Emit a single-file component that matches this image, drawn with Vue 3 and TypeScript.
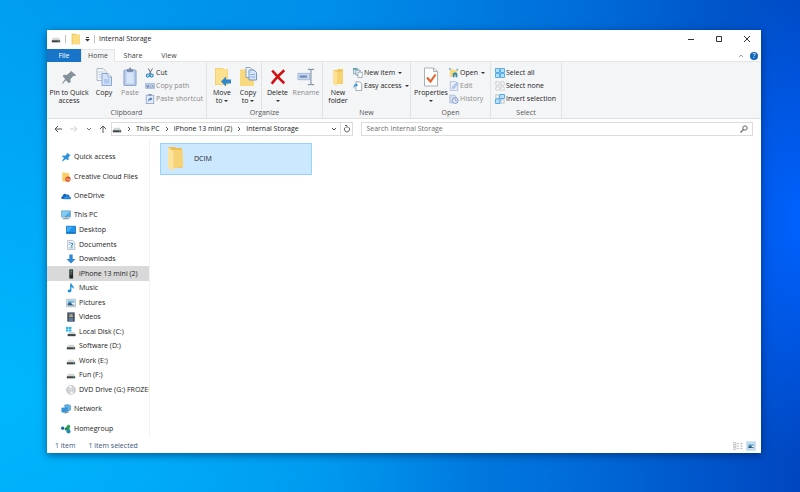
<script setup lang="ts">
import { ref } from 'vue'

interface SmallCommand {
  label: string
  icon: string
  disabled?: boolean
  menu?: boolean
}

interface BigCommand {
  lines: string[]
  icon: string
  size: 'sm' | 'md' | 'lg'
  disabled?: boolean
  menu?: 'inline' | 'below'
  divider?: boolean
}

interface RibbonGroup {
  name: string
  id: string
  big: BigCommand[]
  small: SmallCommand[]
}

interface NavItem {
  label: string
  icon: string
  child?: boolean
  active?: boolean
  spaced?: boolean
}

const tabs = ['File', 'Home', 'Share', 'View']

const groups: RibbonGroup[] = [
  {
    name: 'Clipboard',
    id: 'clipboard',
    big: [
      { lines: ['Pin to Quick', 'access'], icon: 'pin', size: 'lg' },
      { lines: ['Copy'], icon: 'copy', size: 'sm' },
      { lines: ['Paste'], icon: 'paste', size: 'sm', disabled: true },
    ],
    small: [
      { label: 'Cut', icon: 'cut' },
      { label: 'Copy path', icon: 'path', disabled: true },
      { label: 'Paste shortcut', icon: 'shortcut', disabled: true },
    ],
  },
  {
    name: 'Organize',
    id: 'organize',
    big: [
      { lines: ['Move', 'to'], icon: 'move', size: 'sm', menu: 'inline' },
      { lines: ['Copy', 'to'], icon: 'copyto', size: 'sm', menu: 'inline' },
      { lines: ['Delete'], icon: 'delete', size: 'md', menu: 'below', divider: true },
      { lines: ['Rename'], icon: 'rename', size: 'sm', disabled: true },
    ],
    small: [],
  },
  {
    name: 'New',
    id: 'new',
    big: [{ lines: ['New', 'folder'], icon: 'newfolder', size: 'sm' }],
    small: [
      { label: 'New item', icon: 'newitem', menu: true },
      { label: 'Easy access', icon: 'easy', menu: true },
    ],
  },
  {
    name: 'Open',
    id: 'open',
    big: [{ lines: ['Properties'], icon: 'properties', size: 'md', menu: 'below' }],
    small: [
      { label: 'Open', icon: 'open', menu: true },
      { label: 'Edit', icon: 'edit', disabled: true },
      { label: 'History', icon: 'history', disabled: true },
    ],
  },
  {
    name: 'Select',
    id: 'select',
    big: [],
    small: [
      { label: 'Select all', icon: 'selall' },
      { label: 'Select none', icon: 'selnone' },
      { label: 'Invert selection', icon: 'selinv' },
    ],
  },
]

const crumbs = ['This PC', 'iPhone 13 mini (2)', 'Internal Storage']

const places: NavItem[] = [
  { label: 'Quick access', icon: 'quick' },
  { label: 'Creative Cloud Files', icon: 'cc', spaced: true },
  { label: 'OneDrive', icon: 'onedrive', spaced: true },
  { label: 'This PC', icon: 'pc', spaced: true },
  { label: 'Desktop', icon: 'desktop', child: true },
  { label: 'Documents', icon: 'documents', child: true },
  { label: 'Downloads', icon: 'downloads', child: true },
  { label: 'iPhone 13 mini (2)', icon: 'phone', child: true, active: true },
  { label: 'Music', icon: 'music', child: true },
  { label: 'Pictures', icon: 'pictures', child: true },
  { label: 'Videos', icon: 'videos', child: true },
  { label: 'Local Disk (C:)', icon: 'sysdrive', child: true },
  { label: 'Software (D:)', icon: 'drive', child: true },
  { label: 'Work (E:)', icon: 'drive', child: true },
  { label: 'Fun (F:)', icon: 'drive', child: true },
  { label: 'DVD Drive (G:) FROZEN', icon: 'dvd', child: true },
  { label: 'Network', icon: 'network', spaced: true },
  { label: 'Homegroup', icon: 'homegroup', spaced: true },
]

const activeTab = ref('Home')
const query = ref('')
</script>

<template>
  <div class="desktop">
    <svg class="sprites" aria-hidden="true">
      <symbol id="drive" viewBox="0 0 12 12"><path d="M2.500 4.500h7L11 7.500H1z" fill="#d3d6d7" /><path d="M1 7.500h10V10H1z" fill="#3c4143" /><path d="M8.500 8.500h1.500" stroke="#63d27b" /></symbol>
      <symbol id="sysdrive" viewBox="0 0 12 12"><path d="M0 0h3v2.500H0zM3.500 0h3v2.500h-3zM0 3h3v2.500H0zM3.500 3h3v2.500h-3z" fill="#25b5ee" /><path d="M4 6h6l1.500 2.500H2z" fill="#d3d6d7" /><path d="M2 8.500h9.500V11H2z" fill="#3c4143" /></symbol>
      <symbol id="folder" viewBox="0 0 12 14"><path d="M1.500 1h5l1 1H11v11H1.500z" fill="#edc251" /><path d="M2.500 2h8.500v11H2.500z" fill="#fbdc82" /></symbol>
      <symbol id="newfolder" viewBox="0 0 16 20"><path d="M3 3h4l1-1h5v15H3z" fill="#f0c75b" /><path d="M3 3l4 2v14l-4-2z" fill="#fde196" /><path d="M7 5h6v11l-6 1z" fill="#f7d271" /></symbol>
      <symbol id="pin" viewBox="0 0 20 20"><path d="M12 3l6 5-2 1-1-.5-3.500 4 .3 3-1.800 1.500-3.500-3.500L3 17.500l-.7-.6 3.400-4.700L2.800 9l1.700-1.500 3 .4 4-3.500z" fill="#84909a" /></symbol>
      <symbol id="copy" viewBox="0 0 18 20"><path d="M2 1.500h6l3 3v9H2z" fill="#f2f5f9" stroke="#b2b9c2" /><path d="M3.500 5h5M3.500 7.500h5M3.500 10h5" stroke="#bccde6" /><path d="M7 6.500h6l3.500 3.500v8.500H7z" fill="#d3e2f7" stroke="#8ca7cf" /><path d="M13 6.500V10h3.500" fill="#fff" stroke="#8ca7cf" /><path d="M9 12h5.500v4.500H9z" fill="#afcaf0" /></symbol>
      <symbol id="paste" viewBox="0 0 18 20"><rect x="3" y="3" width="12" height="15.500" rx="1" fill="#b9cdec" stroke="#93a7cc" stroke-width="1.200" /><path d="M5.500 5.500h7v11h-7z" fill="#d8e5f8" /><path d="M6 2h2V.8h2V2h2v3H6z" fill="#7d8dab" /></symbol>
      <symbol id="cut" viewBox="0 0 12 12"><path d="M4 .5l3.500 7M9 .5L5 7.500" stroke="#66717c" stroke-width="1.200" /><circle cx="3.500" cy="9" r="1.800" fill="#d7ecfb" stroke="#247fc2" stroke-width="1.300" /><circle cx="8" cy="9" r="1.800" fill="#d7ecfb" stroke="#247fc2" stroke-width="1.300" /></symbol>
      <symbol id="path" viewBox="0 0 12 12"><path d="M.5 3h11v6H.5z" fill="#b9cbe5" stroke="#aabcd9" /><path d="M2 5l1 3 1-3 1 3M6.500 7.500h1M8.500 5l1.500 3" stroke="#657fa9" fill="none" stroke-width=".8" /></symbol>
      <symbol id="shortcut" viewBox="0 0 12 12"><rect x="1.500" y="1.500" width="9" height="10" fill="#e3ecf9" stroke="#92a6c9" /><path d="M4 0h4v2H4z" fill="#8192ae" /><path d="M4 9.500V7c0-1 1-2 2.500-2V3.500L9 6 6.500 8V6.800C5 6.800 5 8 4 9.500z" fill="#4e76ba" /></symbol>
      <symbol id="move" viewBox="0 0 18 20"><path d="M2 1h8l1 1h4v16H2z" fill="#f4d272" /><path d="M3 2h11v15H3z" fill="#fbe08f" /><path d="M8 14.500l5-5v3h5v4h-5v3z" fill="#2c88cc" /></symbol>
      <symbol id="copyto" viewBox="0 0 18 20"><path d="M1 2.500h14V19H1z" fill="#f8d97e" /><path d="M7 .5h4l2 2v8H7z" fill="#f2f6fb" stroke="#8ea3c1" /><path d="M10 3h5l2.500 2.500V13H10z" fill="#d5e4f8" stroke="#7897c6" /><path d="M11.500 7.500h4.500M11.500 10h4.500" stroke="#8caee0" /></symbol>
      <symbol id="delete" viewBox="0 0 20 20"><path d="M3.500 3c4 4 8 9 13.500 14M17 2.500C12 7 7 12 3 17.500" fill="none" stroke="#d00f13" stroke-width="2.800" /></symbol>
      <symbol id="rename" viewBox="0 0 20 20"><path d="M1 6h13v7H1z" fill="#cbdaf0" stroke="#9db4d8" /><path d="M3 9.500h8" stroke="#6d89b3" stroke-width="2.500" /><path d="M12 1.500h2.500l1 1 1-1H19M15.500 2v16M12 18.500h2.500l1-1 1 1H19" fill="none" stroke="#8998ad" stroke-width="1.300" /></symbol>
      <symbol id="newitem" viewBox="0 0 12 12"><path d="M.5 1h5v6h-5z" fill="#dcecf5" stroke="#7d99a9" /><path d="M3.500 2.500h5v6h-5z" fill="#edf5fa" stroke="#7d99a9" /><path d="M6 5h5v6.500H6z" fill="#fff" stroke="#8f9dab" /><path d="M0 0h5v2H0z" fill="#5a9fad" /></symbol>
      <symbol id="easy" viewBox="0 0 12 12"><path d="M3.500 1H8l2.500 2.500v8h-7z" fill="#fff" stroke="#8f9dab" /><path d="M1.300 9.500C0 6 1 4 3.500 4V2.500L6 5 3.500 7V5.500C2 5.500 1.500 7 1.300 9.500z" fill="#2b8fd4" /></symbol>
      <symbol id="properties" viewBox="0 0 18 20"><path d="M2.500 1h9l4 3.500v14.500h-13z" fill="#fff" stroke="#a9afb5" /><path d="M11.500 1v3.500h4" fill="none" stroke="#a9afb5" /><path d="M5 10.500l3.500 4L13.500 7.500" fill="none" stroke="#e4612a" stroke-width="2.100" /></symbol>
      <symbol id="open" viewBox="0 0 12 12"><path d="M1 1.500h4l1 1h4v8H1z" fill="#f8da7a" /><path d="M0 0h2v2H0zM9 1h2v2H9z" fill="#65b4da" /><path d="M4.500 11V7.500c0-3 5.500-3 5.500 0V11H8V8H6.500v3z" fill="#278bc8" /></symbol>
      <symbol id="edit" viewBox="0 0 12 12"><path d="M1.500.5h6l3 3v8h-9z" fill="#e8eff9" stroke="#a8b8d6" /><path d="M4 9l.5-2.500L10 1.500l1.500 1.500L6.500 8.500z" fill="#b9cff0" stroke="#8aa7d5" stroke-width=".7" /></symbol>
      <symbol id="history" viewBox="0 0 12 12"><path d="M1 1.500h6l1.500 2v7H1z" fill="#d4dff0" stroke="#a7b6d0" /><circle cx="7.500" cy="7.800" r="3.500" fill="#e8eff9" stroke="#7e99c6" stroke-width="1.200" /><path d="M7.500 5.500V8h2" fill="none" stroke="#738fbf" /></symbol>
      <symbol id="selall" viewBox="0 0 12 12"><path d="M.6.600h4.800v4.800H.6zM6.600.600h4.800v4.800H6.600zM.6 6.600h4.800v4.800H.6zM6.600 6.600h4.800v4.800H6.600z" fill="#b6e0fb" stroke="#4aa6e2" stroke-width="1.100" /></symbol>
      <symbol id="selnone" viewBox="0 0 12 12"><path d="M1 1h4v4H1zM7 1h4v4H7zM1 7h4v4H1zM7 7h4v4H7z" fill="#fafafa" stroke="#b4b8bc" stroke-dasharray="1.500 .7" /></symbol>
      <symbol id="selinv" viewBox="0 0 12 12"><path d="M1 1h4v4H1zM7 7h4v4H7z" fill="#fafafa" stroke="#b4b8bc" /><path d="M5.600.600h5.800v4.800H5.600zM.6 6h5.400v5.400H.6z" fill="#b6e0fb" stroke="#4aa6e2" stroke-width="1.100" /></symbol>
      <symbol id="quick" viewBox="0 0 12 12"><path d="M7 1l4.500 3-1.200.8L8.800 7l.5 2-1.200 1L6 8.500 1.500 11.500 1 11l2.700-4L1 5.500 2.200 4.300 5 4.500 7 2.500z" fill="#2f92dc" /></symbol>
      <symbol id="cc" viewBox="0 0 12 12"><path d="M1.500.5h4l1 1H10v10H1.500z" fill="#f9d067" /><circle cx="8.300" cy="8.500" r="3.200" fill="#dc4b23" /><path d="M6.500 9c0-1.500 2-1.500 2 0s2 1 1.500-.7" fill="none" stroke="#fff" stroke-width=".8" /></symbol>
      <symbol id="onedrive" viewBox="0 0 12 12"><path d="M1.500 9.500C-.3 9 0 6.500 2 6.300 2 3.500 5.200 2.300 6.800 4.500 9 3.500 10 5 10 6.500c2 0 2.500 3 .5 3z" fill="#1266b6" /><path d="M4 10c-1.500-1-.5-3 1-3 .5-2 3.500-2 4 0C11.500 6.500 12.500 9 11 10z" fill="#2d8adb" /></symbol>
      <symbol id="pc" viewBox="0 0 12 12"><path d="M.5 1h11v7.500H.5z" fill="#4ea9e6" stroke="#8aa7b8" /><path d="M1 1.500h10L4 8H1z" fill="#82cbf4" /><path d="M5 9h2v1H5zM2 10h8v1H2z" fill="#8497a4" /></symbol>
      <symbol id="desktop" viewBox="0 0 12 12"><path d="M.5 1.500h11v8.500H.5z" fill="#1c94ea" stroke="#1072c5" /><path d="M1 2h7L3 8H1z" fill="#40aef5" /><path d="M1 9.500h10" stroke="#0b5fa8" /></symbol>
      <symbol id="documents" viewBox="0 0 12 12"><path d="M2 .5h6l2.500 2.500v8.500H2z" fill="#f3f6f8" stroke="#a8b3bc" /><path d="M3.500 3H6M3.500 5h2M3.500 9.500h5" stroke="#8bb9d9" /><path d="M5.500 5L7 3.500l1.500 1.200L7 6v3" fill="none" stroke="#317fb6" stroke-width="1.200" /></symbol>
      <symbol id="downloads" viewBox="0 0 12 12"><path d="M4 .5h4V6h3.500L6 11.500.5 6H4z" fill="#2f87d5" /></symbol>
      <symbol id="phone" viewBox="0 0 12 12"><rect x="4" y=".5" width="4.500" height="11" fill="#24292a" /><path d="M5 2h2.500v5H5z" fill="#50585a" /><path d="M5.500 2.500h2" stroke="#4fd06c" /></symbol>
      <symbol id="music" viewBox="0 0 12 12"><path d="M5 .5h1.500C7 3 10.500 3.500 9 7.500 8.800 5.500 7.500 5 6.500 4.700V9c0 3-4.500 3-4.500.7C2 8 4 7.500 5 8z" fill="#1f8ee0" /></symbol>
      <symbol id="pictures" viewBox="0 0 12 12"><path d="M.5 1.500h11v9H.5z" fill="#e9f3f9" stroke="#a9b7c0" /><path d="M2 3h8v3L7.500 5.500 5 8H2z" fill="#70b8e3" /><path d="M2 7l3-2 3 3h2v1H2z" fill="#345c75" /></symbol>
      <symbol id="videos" viewBox="0 0 12 12"><path d="M1.500.5h9v11h-9z" fill="#3b4046" /><path d="M3.500 1.500h5V6h-5zM3.500 6.700h5V11h-5z" fill="#527fae" /><path d="M5 4l2-1.500L8.500 6h-5z" fill="#c5a764" /><path d="M2.300 1v10M9.700 1v10" stroke="#b5babf" stroke-width=".8" stroke-dasharray="1 1" /></symbol>
      <symbol id="dvd" viewBox="0 0 12 12"><circle cx="6" cy="6" r="5.300" fill="#d3d6d8" stroke="#a3a8ac" stroke-width=".7" /><path d="M6 6L3 1.500 7 1zM6 6l3 4.500-4 .8z" fill="#f5f6f6" /><circle cx="6" cy="6" r="1.400" fill="#fff" stroke="#a3a8ac" stroke-width=".6" /></symbol>
      <symbol id="network" viewBox="0 0 12 12"><path d="M4 1.500l4-1 3.500 1.500v5L8 9z" fill="#62b4e6" stroke="#3a83b8" stroke-width=".7" /><path d="M.5 4.500L8 3.500v5.500L2 10.500.5 9z" fill="#3795d5" /><path d="M3 10.500l5-1.500 1.500 1L5 11.500z" fill="#6f8593" /></symbol>
      <symbol id="homegroup" viewBox="0 0 12 12"><circle cx="2" cy="5" r="2" fill="#1763a9" /><path d="M4 6l5-5 1.500 2v5L8 8z" fill="#35a457" /><circle cx="9" cy="2.800" r="2" fill="#35a457" /><circle cx="9" cy="9" r="2.500" fill="#2789bb" /><circle cx="6.300" cy="6" r="1.800" fill="#1c8a5c" /></symbol>
      <symbol id="bigfolder" viewBox="0 0 18 26"><path d="M1 1h7l1 1h6v20H1z" fill="#edbf54" /><path d="M6 4h9.500l.8 17L6 22.500z" fill="#f7d377" /><path d="M1 1l5.500 4v20.500L1 21.500z" fill="#fbe3a0" /></symbol>
      <symbol id="details" viewBox="0 0 12 10"><path d="M.5.500h3v2.500h-3zM.5 3.700h3v2.500h-3zM.5 7h3v2.500h-3z" fill="#fff" stroke="#b0b4b8" stroke-width=".8" /><path d="M5 2h2M9 2h2.500M5 5h2M9 5h2.500M5 8h2M9 8h2.500" stroke="#9a9ea2" /></symbol>
    </svg>

    <main class="window">
      <header class="titlebar">
        <svg class="i10"><use href="#drive" /></svg>
        <span class="bar"></span>
        <svg class="i12"><use href="#folder" /></svg>
        <button class="plain qat" aria-label="Customize Quick Access Toolbar">
          <svg width="5" height="6" viewBox="0 0 5 6"><path d="M1 1.500h3" stroke="#333" /><path d="M0 3h5L2.500 5.500z" fill="#333" /></svg>
        </button>
        <span class="bar"></span>
        <h1>Internal Storage</h1>
        <div class="controls">
          <button class="plain" aria-label="Minimize"><svg width="8" height="8" viewBox="0 0 8 8"><path d="M1 4.500h6" stroke="#333" /></svg></button>
          <button class="plain" aria-label="Maximize"><svg width="8" height="8" viewBox="0 0 8 8"><path d="M1.500 1.500h5v5h-5z" fill="none" stroke="#333" /></svg></button>
          <button class="plain" aria-label="Close"><svg width="8" height="8" viewBox="0 0 8 8"><path d="M1 1l6 6M7 1L1 7" stroke="#333" /></svg></button>
        </div>
      </header>

      <div class="tabs">
        <button
          v-for="tab in tabs"
          :key="tab"
          class="tab"
          :class="{ file: tab === 'File', current: tab === activeTab }"
          @click="activeTab = tab"
        >
          {{ tab }}
        </button>
        <div class="help">
          <button class="plain" aria-label="Minimize the Ribbon"><svg width="6" height="6" viewBox="0 0 6 6"><path d="M1 4l2-2 2 2" fill="none" stroke="#9a9a9a" /></svg></button>
          <button class="plain round" aria-label="Help">?</button>
        </div>
      </div>

      <div class="ribbon">
        <section v-for="group in groups" :key="group.id" class="group" :class="group.id">
          <div class="commands">
            <button
              v-for="cmd in group.big"
              :key="cmd.lines[0]"
              class="big"
              :class="[cmd.size, { divider: cmd.divider }]"
              :disabled="cmd.disabled"
            >
              <svg><use :href="'#' + cmd.icon" /></svg>
              <span v-for="(line, n) in cmd.lines" :key="line" class="line">
                {{ line }}<i v-if="cmd.menu === 'inline' && n === 1" class="caret"></i>
              </span>
              <span v-if="cmd.menu === 'below'" class="line"><i class="caret"></i></span>
            </button>
            <div v-if="group.small.length" class="stack">
              <button v-for="cmd in group.small" :key="cmd.label" class="small" :disabled="cmd.disabled">
                <svg class="i10"><use :href="'#' + cmd.icon" /></svg>
                <span>{{ cmd.label }}</span>
                <i v-if="cmd.menu" class="caret"></i>
              </button>
            </div>
          </div>
          <h2>{{ group.name }}</h2>
        </section>
      </div>

      <div class="address">
        <div class="history">
          <button class="plain" aria-label="Back"><svg width="8" height="8" viewBox="0 0 8 8"><path d="M8 4H1M4 1L1 4l3 3" fill="none" stroke="#555" /></svg></button>
          <button class="plain" aria-label="Forward"><svg width="8" height="8" viewBox="0 0 8 8"><path d="M0 4h7M4 1l3 3-3 3" fill="none" stroke="#d0d0d0" /></svg></button>
          <button class="plain" aria-label="Recent locations"><svg width="4" height="8" viewBox="0 0 4 8"><path d="M0 3l2 2 2-2" fill="none" stroke="#777" /></svg></button>
          <button class="plain" aria-label="Up"><svg width="8" height="8" viewBox="0 0 8 8"><path d="M4 8V1M1 4l3-3 3 3" fill="none" stroke="#555" /></svg></button>
        </div>
        <nav class="crumbs" aria-label="Address">
          <svg class="i10"><use href="#drive" /></svg>
          <template v-for="crumb in crumbs" :key="crumb">
            <svg class="sep" viewBox="0 0 4 6"><path d="M1 1l2 2-2 2" fill="none" stroke="#555" /></svg>
            <a href="#">{{ crumb }}</a>
          </template>
          <button class="plain drop" aria-label="Previous locations"><svg width="6" height="6" viewBox="0 0 6 6"><path d="M1 2l2 2 2-2" fill="none" stroke="#444" /></svg></button>
          <button class="plain refresh" aria-label="Refresh"><svg width="8" height="8" viewBox="0 0 8 8"><path d="M5.500 2.200A2.600 2.600 0 1 1 2.500 2.200M2 .5h2v2.500" fill="none" stroke="#666" /></svg></button>
        </nav>
        <label class="search">
          <input v-model="query" type="text" placeholder="Search Internal Storage" aria-label="Search Internal Storage" />
          <svg width="8" height="8" viewBox="0 0 8 8"><circle cx="5" cy="3" r="2.200" fill="none" stroke="#666" /><path d="M3.500 4.500L.5 7.500" stroke="#666" stroke-width="1.200" /></svg>
        </label>
      </div>

      <div class="body">
        <nav class="tree" aria-label="Navigation pane">
          <template v-for="item in places" :key="item.label">
            <div v-if="item.spaced" class="spacer"></div>
            <a href="#" class="place" :class="{ child: item.child, active: item.active }">
              <svg class="i10"><use :href="'#' + item.icon" /></svg>
              <span>{{ item.label }}</span>
            </a>
          </template>
        </nav>
        <section class="files" aria-label="Files">
          <button class="tile">
            <svg><use href="#bigfolder" /></svg>
            <span>DCIM</span>
          </button>
        </section>
      </div>

      <footer class="status">
        <span>1 item</span>
        <span>1 item selected</span>
        <div class="views">
          <button class="plain" aria-label="Details view"><svg width="10" height="8"><use href="#details" /></svg></button>
          <button class="plain on" aria-label="Large icons view"><svg width="8" height="8"><use href="#pictures" /></svg></button>
        </div>
      </footer>
    </main>
  </div>
</template>

<style>
body {
  margin: 0;
}
</style>

<style scoped>
.desktop {
  box-sizing: border-box;
  display: flex;
  min-height: 100vh;
  padding: 30px 39px 39px 47px;
  background:
    radial-gradient(ellipse 120px 240px at 100% 45%, #0062ff 0%, rgba(0, 98, 255, 0) 100%),
    radial-gradient(ellipse 480px 420px at 0% 80%, rgba(0, 186, 255, 0.9) 0%, rgba(0, 186, 255, 0) 100%),
    linear-gradient(92deg, #009cf0 0%, #008fea 40%, #006cd8 72%, #0046c0 100%);
  font-family: 'Open Sans', 'Noto Sans', sans-serif;
  font-size: 7px;
  line-height: 8px;
  color: #222;
}
.sprites {
  position: absolute;
  width: 0;
  height: 0;
}
button {
  margin: 0;
  padding: 0;
  border: 0;
  background: none;
  font: inherit;
  color: inherit;
}
button:disabled {
  color: #8b8b8b;
}
a {
  color: inherit;
  text-decoration: none;
}
h1,
h2 {
  margin: 0;
  font-size: inherit;
  font-weight: 400;
}
svg {
  flex: none;
}
.plain {
  display: flex;
  align-items: center;
  justify-content: center;
}
.i10 {
  width: 10px;
  height: 10px;
}
.i12 {
  width: 11px;
  height: 12px;
}
.window {
  display: flex;
  flex: 1;
  flex-direction: column;
  min-width: 0;
  background: #fff;
  box-shadow: 0 2px 8px rgba(0, 20, 70, 0.55);
}
.titlebar {
  box-sizing: border-box;
  display: flex;
  align-items: center;
  height: 19px;
  padding: 0 0 1px 4px;
  gap: 4px;
}
.bar {
  width: 1px;
  height: 8px;
  background: #c4c4c4;
}
.controls {
  display: flex;
  margin-left: auto;
}
.controls button {
  width: 28px;
  height: 18px;
}
.tabs {
  display: flex;
  height: 13px;
  box-shadow: inset 0 -1px #e4e5e6;
}
.tab {
  box-sizing: border-box;
  width: 36px;
  color: #444;
}
.tab.file {
  width: 34px;
  background: #1874c9;
  color: #fff;
}
.tab.current {
  width: 34px;
  border: 1px solid #e4e5e6;
  border-bottom: 0;
  background: #f4f5f7;
}
.help {
  display: flex;
  align-items: center;
  margin-left: auto;
  padding-right: 3px;
  gap: 6px;
}
.round {
  width: 8px;
  height: 8px;
  border-radius: 50%;
  background: #1067ba;
  color: #fff;
}
.ribbon {
  display: flex;
  border-bottom: 1px solid #dfe0e2;
  background: #f4f5f7;
}
.group {
  box-sizing: border-box;
  display: flex;
  flex-direction: column;
  border-right: 1px solid #e2e3e5;
}
.group h2 {
  padding-bottom: 1px;
  color: #555;
  text-align: center;
}
.commands {
  display: flex;
  height: 47px;
}
.clipboard {
  width: 160px;
}
.organize {
  width: 116px;
}
.new {
  width: 88px;
}
.open {
  width: 80px;
}
.select {
  width: 71px;
}
.big {
  box-sizing: border-box;
  display: flex;
  flex-direction: column;
  align-items: center;
  width: 26px;
  padding-top: 5px;
}
.big svg {
  width: 18px;
  height: 20px;
  margin-bottom: 2px;
}
.big.md {
  width: 32px;
}
.big.lg {
  width: 44px;
}
.big.divider {
  border-left: 1px solid #e2e3e5;
}
.line {
  display: flex;
  align-items: center;
  justify-content: center;
  height: 8px;
  gap: 2px;
  white-space: nowrap;
}
.organize .commands,
.new .commands,
.select .commands {
  padding-left: 2px;
}
.open .commands {
  padding-left: 4px;
}
.caret {
  width: 0;
  height: 0;
  border: 2px solid transparent;
  border-top-color: #333;
  border-bottom: 0;
}
.stack {
  padding: 4px 0 0 2px;
}
.small {
  display: flex;
  align-items: center;
  height: 13px;
  gap: 1px;
  white-space: nowrap;
}
.small .caret {
  margin-left: 2px;
}
.address {
  box-sizing: border-box;
  display: flex;
  align-items: center;
  height: 20px;
  padding-right: 8px;
}
.history {
  box-sizing: border-box;
  display: flex;
  align-items: center;
  justify-content: space-between;
  width: 64px;
  padding: 0 4px 0 7px;
}
.crumbs,
.search {
  box-sizing: border-box;
  display: flex;
  align-items: center;
  height: 14px;
  border: 1px solid #dcdcdc;
  white-space: nowrap;
}
.crumbs {
  flex: 242 1 0;
  min-width: 0;
  gap: 5px;
}
.sep {
  width: 4px;
  height: 6px;
}
.drop {
  margin-left: auto;
}
.refresh {
  width: 12px;
  height: 12px;
  margin-left: -2px;
  border-left: 1px solid #dcdcdc;
}
.search {
  flex: 384 1 0;
  min-width: 0;
  margin-left: 8px;
  padding: 0 4px;
}
.search input {
  flex: 1;
  min-width: 0;
  padding: 0;
  border: 0;
  outline: 0;
  background: none;
  font: inherit;
  color: inherit;
}
.search input::placeholder {
  color: #6d6d6d;
  opacity: 1;
}
.body {
  display: flex;
  flex: 1;
}
.tree {
  box-sizing: border-box;
  display: flex;
  flex-direction: column;
  width: 103px;
  padding: 11px 0 2px;
  border-right: 1px solid #f2f2f2;
}
.spacer {
  flex: 1 1 0;
}
.place {
  display: flex;
  flex: 3 1 0;
  align-items: center;
  padding-left: 14px;
  gap: 3px;
  overflow: hidden;
  white-space: nowrap;
}
.place.child {
  padding-left: 19px;
}
.place.active {
  background: #d9d9d9;
}
.files {
  flex: 1;
  padding: 4px 10px;
}
.tile {
  box-sizing: border-box;
  display: flex;
  align-items: center;
  width: 152px;
  height: 32px;
  padding-left: 6px;
  gap: 9px;
  border: 1px solid #99d1ff;
  background: #cce8ff;
}
.tile svg {
  width: 18px;
  height: 26px;
}
.status {
  display: flex;
  align-items: center;
  height: 15px;
  padding: 0 5px 0 8px;
  gap: 13px;
  color: #3b5580;
}
.views {
  display: flex;
  align-items: center;
  margin-left: auto;
  gap: 3px;
}
.views .on {
  width: 10px;
  height: 10px;
  background: #cce8ff;
}
</style>
